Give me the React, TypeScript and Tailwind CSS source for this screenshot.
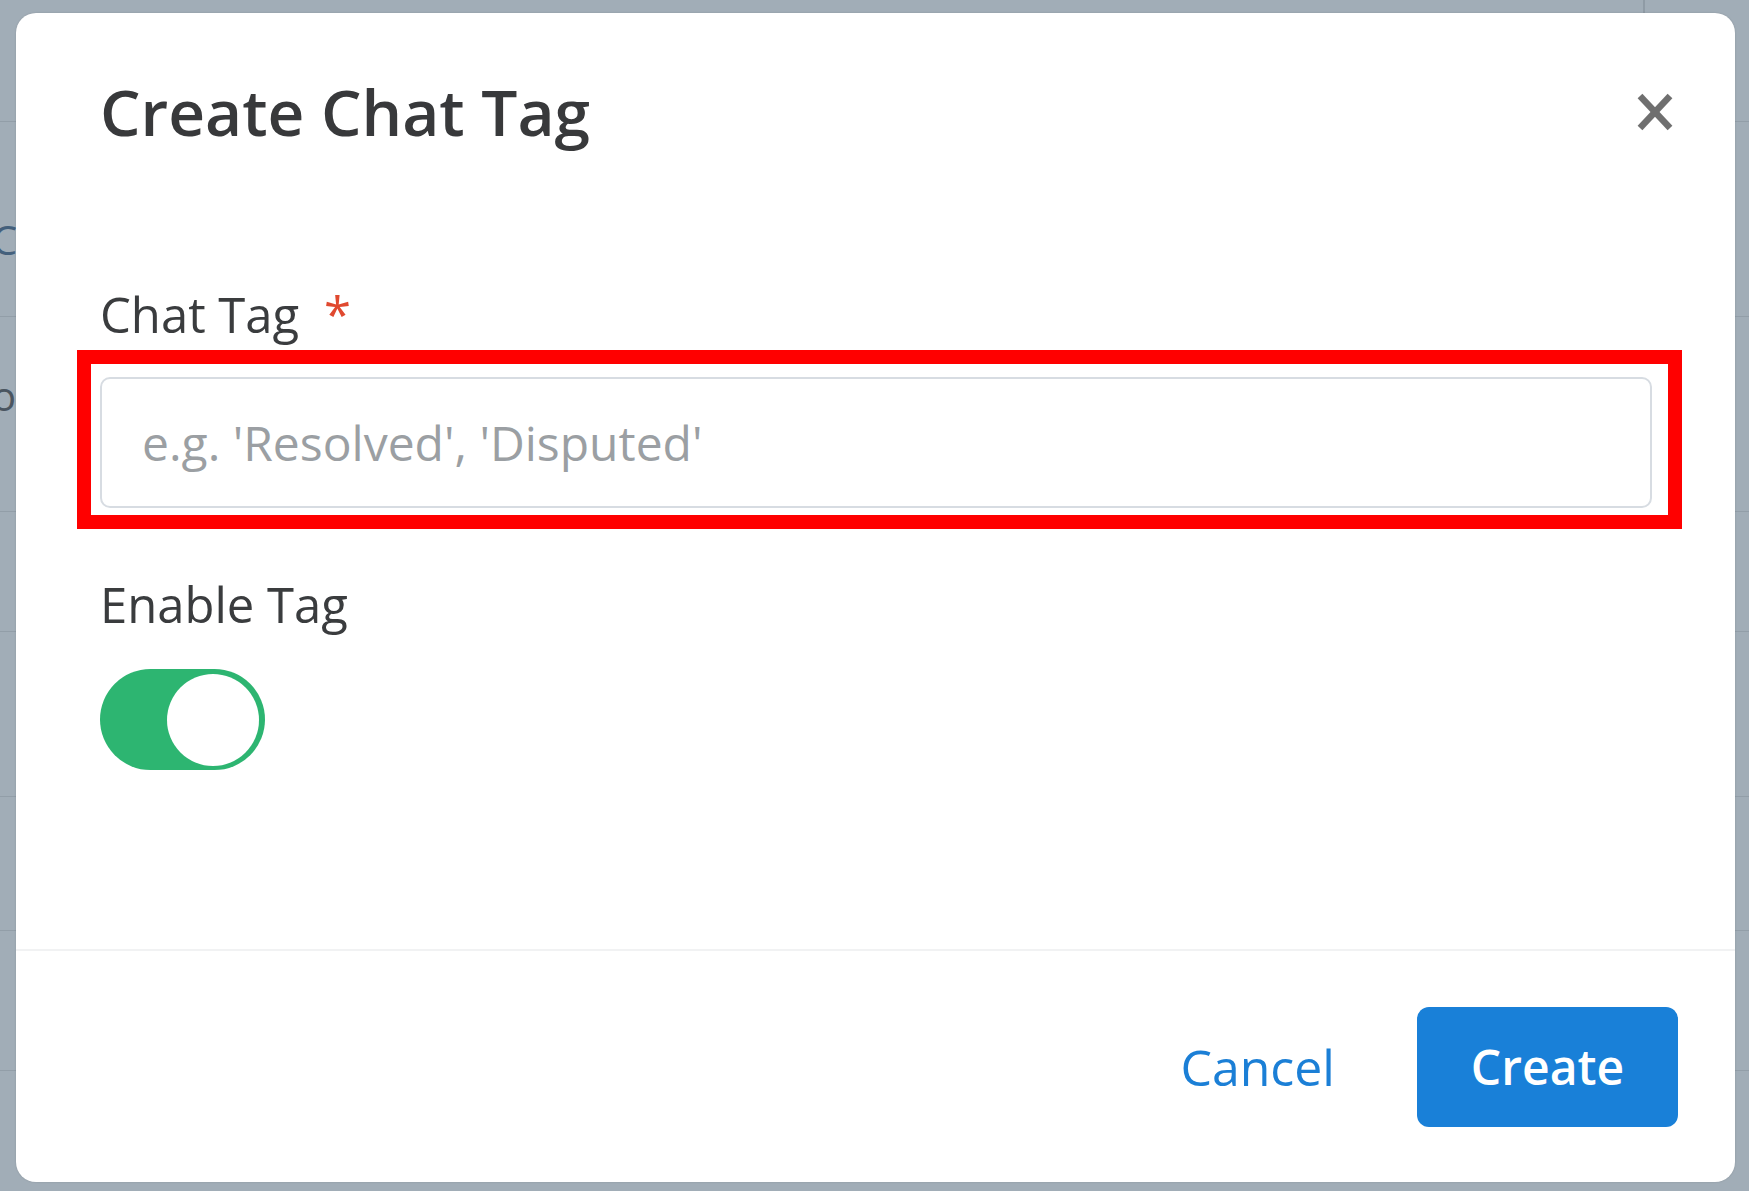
import React from "react";

function CloseIcon() {
  return (
    <svg width="36" height="38" viewBox="0 0 36 38" fill="none" className="overflow-visible">
      <line x1="3" y1="3" x2="33" y2="35" stroke="#6f6f6f" strokeWidth="6.5" />
      <line x1="33" y1="3" x2="3" y2="35" stroke="#6f6f6f" strokeWidth="6.5" />
    </svg>
  );
}

export default function App() {
  return (
    <div
      className="relative w-full h-[1191px] overflow-hidden bg-[#a1adb7]"
      style={{ fontFamily: "'Open Sans', 'Noto Sans', sans-serif" }}
    >
      {/* dimmed page behind the dialog */}
      <div className="flex flex-col w-full">
        <div className="flex h-[122px] border-b border-[#929ea8]">
          <div className="w-[1645px] border-r-2 border-[#8f9ba5]" />
          <div className="flex-1" />
        </div>
        <div className="flex items-start h-[195px] pt-[98px] border-b border-[#929ea8]">
          <span className="ml-[-8px] text-[40px] leading-none text-[#44607c]">C</span>
        </div>
        <div className="flex items-start h-[195px] pt-[59px] border-b border-[#929ea8]">
          <span className="ml-[-8px] text-[40px] leading-none text-[#4a5560]">o</span>
        </div>
        <div className="h-[120px] border-b border-[#929ea8]" />
        <div className="h-[165px] border-b border-[#929ea8]" />
        <div className="h-[134px] border-b border-[#929ea8]" />
        <div className="h-[140px] border-b border-[#929ea8]" />
      </div>

      {/* dialog */}
      <div className="absolute left-[16px] top-[13px] w-[1719px] h-[1169px] flex flex-col bg-white rounded-[20px] shadow-[0_0_2px_rgba(0,0,0,0.15)]">
        <div className="flex items-center justify-between pl-[84px] pr-[62px] pt-[67px]">
          <h1 className="text-[64px] leading-none font-semibold text-[#38393b]">Create Chat Tag</h1>
          <button className="flex items-center justify-center">
            <CloseIcon />
          </button>
        </div>

        <div className="flex flex-col pl-[84px] pr-[83px]">
          <label className="mt-[146px] h-[48px] text-[49px] leading-none text-[#3a3c3e]">
            Chat Tag <span className="ml-[12px] text-[#e0492f]">*</span>
          </label>
          <div className="relative mt-[39px]">
            <input
              type="text"
              placeholder="e.g. 'Resolved', 'Disputed'"
              className="w-full h-[131px] rounded-[10px] border-2 border-[#d7dce2] bg-white pl-[40px] text-[48px] text-[#333] outline-none placeholder:text-[#9b9fa3]"
            />
            <div className="pointer-events-none absolute -top-[27px] -left-[23px] -right-[30px] -bottom-[21px] border-[14px] border-[#ff0000]" />
          </div>
          <div className="mt-[72px] h-[48px] text-[49px] leading-none text-[#3a3c3e]">Enable Tag</div>
          <div className="mt-[41px] flex items-center justify-end w-[165px] h-[101px] rounded-full bg-[#2db571] pr-[6px]">
            <div className="w-[92px] h-[92px] rounded-full bg-white" />
          </div>
        </div>

        <div className="flex-1" />

        <div className="flex items-center justify-end gap-[32px] border-t-2 border-[#f1f2f3] pt-[56px] pb-[55px] pr-[57px]">
          <button className="h-[120px] px-[50px] text-[50px] text-[#1b7fd6]">Cancel</button>
          <button className="h-[120px] w-[261px] rounded-[12px] bg-[#1980d8] text-[48px] font-semibold text-white">
            Create
          </button>
        </div>
      </div>
    </div>
  );
}
